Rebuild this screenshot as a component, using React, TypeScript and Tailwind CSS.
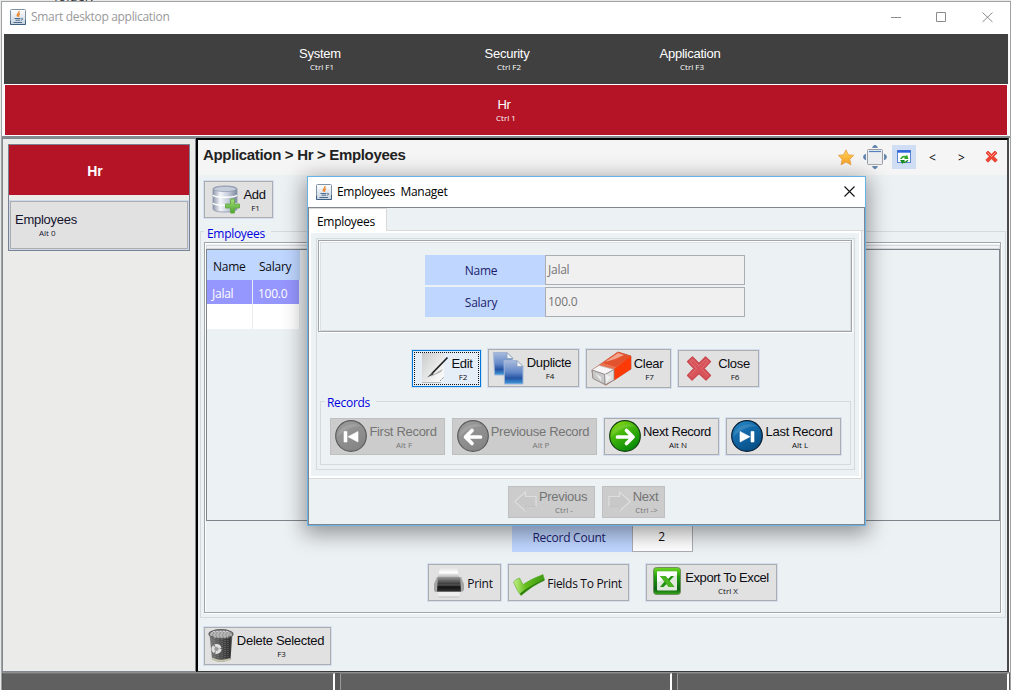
import type { ReactNode } from "react";

const UI = "font-['Open_Sans','Noto_Sans',sans-serif]";

function JavaIcon() {
  return (
    <svg width="16" height="16" viewBox="0 0 16 16" className="block shrink-0">
      <defs>
        <linearGradient id="jv" x1="0" y1="0" x2="0" y2="1">
          <stop offset="0" stopColor="#ffffff" />
          <stop offset="1" stopColor="#c6d2de" />
        </linearGradient>
      </defs>
      <rect x="0.5" y="0.5" width="15" height="15" rx="1" fill="url(#jv)" stroke="#7e92a6" />
      <path d="M0.5 15.5V12M0.5 15.5h15V11" stroke="#3f5f80" fill="none" />
      <path d="M9 2C10 4 6 4.500 7.500 7.500M10 4.500C8 5.500 8.500 6.500 8.800 7.800" stroke="#ec7d1a" strokeWidth="1.200" fill="none" />
      <path d="M4.500 9.500h6M5.500 11.200h4.500M3.500 13.500h8.500M11.300 9.300c2-.3 1.800 1.700-.5 1.900" stroke="#4a6c8f" strokeWidth="1" fill="none" />
    </svg>
  );
}

function AddIcon() {
  return (
    <svg width="28" height="29" viewBox="0 0 28 29" className="block">
      <defs>
        <linearGradient id="db" x1="0" x2="1">
          <stop offset="0" stopColor="#8f99ab" />
          <stop offset="0.3" stopColor="#f4f6fa" />
          <stop offset="0.65" stopColor="#c3cad8" />
          <stop offset="1" stopColor="#7e899f" />
        </linearGradient>
        <linearGradient id="pl" x1="0" x2="0" y1="0" y2="1">
          <stop offset="0" stopColor="#a7dc7c" />
          <stop offset="1" stopColor="#4ba52c" />
        </linearGradient>
      </defs>
      <path d="M1 4C1 0 25 0 25 4V24C25 28 1 28 1 24Z" fill="url(#db)" stroke="#8c95a9" strokeWidth="0.800" />
      <ellipse cx="13" cy="4" rx="11.500" ry="2.600" fill="#c5ccda" stroke="#8e98ac" strokeWidth="0.700" />
      <path d="M1 10C2 13 24 13 25 10M1 18C2 21 24 21 25 18" stroke="#fff" strokeWidth="1.400" fill="none" />
      <path d="M18.500 14h4v5H27.500v4h-5v5h-4v-5h-5v-4h5z" fill="url(#pl)" stroke="#62a948" strokeWidth="0.900" />
    </svg>
  );
}

function EditIcon() {
  return (
    <svg width="27" height="30" viewBox="0 0 27 30" className="block">
      <defs>
        <linearGradient id="pp" x1="0" x2="1" y1="0" y2="1">
          <stop offset="0" stopColor="#c9cacb" />
          <stop offset="0.8" stopColor="#f7f7f7" />
        </linearGradient>
      </defs>
      <path d="M0 0H22V26L18 29.500H0Z" fill="url(#pp)" />
      <path d="M0 29.500h19" stroke="#bbb" />
      <path d="M8 24Q18 17 21 16L19 19Z" fill="#9a9a9a" opacity="0.700" />
      <path d="M25.500 4.500L10 20.500" stroke="#1d1d1d" strokeWidth="1.700" />
      <path d="M11 18.800L5 24.500L11.500 21.500Z" fill="#444" />
      <path d="M18 28l4-4" stroke="#888" strokeDasharray="2 1" />
    </svg>
  );
}

function CopyIcon() {
  return (
    <svg width="31" height="33" viewBox="0 0 31 33" className="block">
      <defs>
        <linearGradient id="cp" x1="0" x2="0" y1="0" y2="1">
          <stop offset="0" stopColor="#a9bbdc" />
          <stop offset="0.5" stopColor="#6488c8" />
          <stop offset="0.75" stopColor="#2554a4" />
          <stop offset="1" stopColor="#3f9cdc" />
        </linearGradient>
      </defs>
      <path d="M0.500 0.500H14L19.500 6V23H1.500Z" fill="url(#cp)" stroke="#a3b6d8" />
      <path d="M14 0.500V6.500H20Z" fill="#edf2f8" stroke="#8a98b0" strokeWidth="0.700" />
      <path d="M11 8.500H24L30 14.500V32H11.500Z" fill="url(#cp)" stroke="#a3b6d8" />
      <path d="M24 8.500V14.500H30Z" fill="#edf2f8" stroke="#8a98b0" strokeWidth="0.700" />
    </svg>
  );
}

function EraserIcon() {
  return (
    <svg width="41" height="35" viewBox="0 0 41 35" className="block">
      <path d="M1 19L27 1L40 5V18L15 34L2 27Z" fill="#e63611" stroke="#a3553f" strokeWidth="0.700" />
      <path d="M1 19L27 1L40 5L23 18.500Z" fill="#e8714f" />
      <path d="M12 12L27 1L40 5L25 16Z" fill="#e2522c" />
      <path d="M14 11L27 2L33 4Q24 9 14 11Z" fill="#f3a48d" />
      <path d="M40 5L23 18.500V29.500L40 18Z" fill="#fb3a08" />
      <path d="M1 19L8 14.500L23 18.500L14 23.500Z" fill="#f6f6f6" stroke="#bbb" strokeWidth="0.600" />
      <path d="M1 19L14 23.500V33.500L2 27.500Z" fill="#c8c8c8" stroke="#888" strokeWidth="0.800" />
      <path d="M14 23.500L23 18.500V29L14 34Z" fill="#dedede" stroke="#888" strokeWidth="0.800" />
      <path d="M14 23L20 26L15 32ZM4 22L10 26V30Z" fill="#f4f4f4" opacity="0.800" />
    </svg>
  );
}

function CloseIcon() {
  return (
    <svg width="26" height="25" viewBox="0 0 26 25" className="block">
      <path d="M6.500 1L13 7.500L19.500 1L24.500 5.500L18 12.500L24.500 19.500L20 24L13 17.500L6 24L1.500 19.500L8 12.500L1.500 5.500Z" fill="#d8545a" stroke="#c9474d" strokeWidth="1.200" strokeLinejoin="round" />
      <path d="M4 5.500L6.500 3.500L13 10L19.500 3.500L22 5.500L15.500 12.500L22 19.500M4 19.500L10.500 12.500L4 5.500" fill="none" stroke="#e0777b" strokeWidth="0.800" />
    </svg>
  );
}

type CircleKind = "first" | "prev" | "next" | "last";
const circleFill = { first: "#929292", prev: "#929292", next: "#47b80c", last: "#136aaa" };
const circleTop = { first: "#9c9c9c", prev: "#9c9c9c", next: "#9ce410", last: "#2a91ce" };
const circleLow = { first: "#858585", prev: "#858585", next: "#078b08", last: "#075087" };
const circleEdge = { first: "#5c5c5c", prev: "#5c5c5c", next: "#133f12", last: "#071c33" };

function CircleIcon({ kind }: { kind: CircleKind }) {
  return (
    <svg width="32" height="32" viewBox="0 0 32 32" className="block">
      <defs>
        <linearGradient id={"ci" + kind} x1="0" x2="0.6" y1="0" y2="1">
          <stop offset="0" stopColor={circleTop[kind]} />
          <stop offset="0.45" stopColor={circleFill[kind]} />
          <stop offset="1" stopColor={circleLow[kind]} />
        </linearGradient>
      </defs>
      <circle cx="16" cy="16" r="15.300" fill={"url(#ci" + kind + ")"} stroke={circleEdge[kind]} strokeWidth="1.200" />
      <path d="M2 17C5 5 17 2 26 6C20 6 9 9 2 17Z" fill="#fff" opacity="0.120" />
      {kind === "first" && <path d="M9 11.500h3v10.500H9zM23 11.500v10.500L13 16.700z" fill="#fff" stroke="#fff" strokeWidth="0.600" strokeLinejoin="round" />}
      {kind === "last" && <path d="M20 11.500h3v10.500h-3zM9 11.500v10.500L19 16.700z" fill="#fff" stroke="#fff" strokeWidth="0.600" strokeLinejoin="round" />}
      {kind === "prev" && <path d="M23.500 17H10M15 10.500L8.500 17L15 23.500" stroke="#fff" strokeWidth="3.700" strokeLinecap="round" strokeLinejoin="round" fill="none" />}
      {kind === "next" && <path d="M8.500 17H23M17.500 10.500L24 17L17.500 23.500" stroke="#fff" strokeWidth="3.700" strokeLinecap="round" strokeLinejoin="round" fill="none" />}
    </svg>
  );
}

function GhostArrow({ right = false }: { right?: boolean }) {
  return (
    <svg width="23" height="21" viewBox="0 0 23 21" className={right ? "block -scale-x-100" : "block"}>
      <path d="M0.800 10.500L11.500 1V5.500H22V15.500H11.500V20Z" fill="#c8c8c8" stroke="#dedede" strokeWidth="1.200" />
      <path d="M11.500 20V15.500H22" stroke="#b8b8b8" strokeWidth="0.700" fill="none" />
    </svg>
  );
}

function PrintIcon() {
  return (
    <svg width="30" height="30" viewBox="0 0 30 30" className="block">
      <defs>
        <linearGradient id="pr" x1="0" x2="0" y1="0" y2="1">
          <stop offset="0" stopColor="#9a9a9a" />
          <stop offset="0.4" stopColor="#4a4a4a" />
          <stop offset="0.7" stopColor="#151515" />
          <stop offset="1" stopColor="#333" />
        </linearGradient>
        <linearGradient id="ps" x1="0" x2="0" y1="0" y2="1">
          <stop offset="0" stopColor="#e3e3e3" />
          <stop offset="0.5" stopColor="#ffffff" />
          <stop offset="1" stopColor="#b9b9b9" />
        </linearGradient>
      </defs>
      <path d="M6 0H23L25 9H4Z" fill="url(#ps)" />
      <path d="M3 9H27L30 16V22Q29 24 26 24H3Q0 24 0 22V16Z" fill="#a4a4a4" />
      <path d="M4 9H26L27 23.500H3Z" fill="url(#pr)" />
      <path d="M3 17H27" stroke="#777" strokeWidth="0.700" />
      <path d="M4.500 24H25.500V29.500H4.500Z" fill="#eeeeee" />
      <path d="M4.500 29H25.500" stroke="#bbb" />
    </svg>
  );
}

function CheckIcon() {
  return (
    <svg width="32" height="22" viewBox="0 0 32 22" className="block">
      <defs>
        <linearGradient id="ck" x1="0" x2="1" y1="0" y2="0">
          <stop offset="0" stopColor="#c6f28a" />
          <stop offset="0.4" stopColor="#63bd1b" />
          <stop offset="1" stopColor="#3f9a14" />
        </linearGradient>
      </defs>
      <path d="M0.500 8Q3 5 6.500 4L10 10.500Q18 5 30 0.500L31.500 6Q20 11 8 21.500Q4 17 0.500 8Z" fill="url(#ck)" stroke="#5aa830" strokeWidth="0.600" />
      <path d="M7 19.500Q16 12 31 5.500L31.500 6.500Q20 11 8 21.500Z" fill="#2c7d0c" />
    </svg>
  );
}

function ExcelIcon() {
  return (
    <svg width="28" height="28" viewBox="0 0 28 28" className="block">
      <defs>
        <linearGradient id="xl" x1="0" x2="0" y1="0" y2="1">
          <stop offset="0" stopColor="#70d824" />
          <stop offset="0.35" stopColor="#219a0f" />
          <stop offset="0.8" stopColor="#0b6610" />
          <stop offset="1" stopColor="#38a81a" />
        </linearGradient>
      </defs>
      <rect x="0.500" y="0.500" width="27" height="27" rx="3" fill="url(#xl)" stroke="#6e8f60" />
      <rect x="4" y="4.500" width="20" height="19" rx="1" fill="#dfe8db" />
      <path d="M4 15L24 8V4.500H4Z" fill="#fff" />
      <path d="M7 9H12.500L15 12L18 9H21L16.500 14L21.500 20H15.800L13.500 17L10.500 20H7L11.500 14.500Z" fill="#23900f" />
      <path d="M7 9H12.500L21.500 20H15.800Z" fill="#4ab521" />
    </svg>
  );
}

function TrashIcon() {
  return (
    <svg width="26" height="34" viewBox="0 0 26 34" className="block">
      <defs>
        <linearGradient id="tr" x1="0" x2="1">
          <stop offset="0" stopColor="#7d7d7d" />
          <stop offset="0.5" stopColor="#4f4f4f" />
          <stop offset="0.9" stopColor="#303030" />
          <stop offset="1" stopColor="#777" />
        </linearGradient>
      </defs>
      <path d="M1.500 5L4 30Q12 35 22.500 30.500L24.500 5Z" fill="url(#tr)" />
      <path d="M4 29.500Q12 34 22.500 30" stroke="#c3c2ad" strokeWidth="2.200" fill="none" />
      <path d="M14 10V30M17 9V30M20 9V29M6 9L7 29M10 10V30" stroke="#929292" strokeWidth="0.600" strokeDasharray="1 1" />
      <ellipse cx="13" cy="5" rx="12" ry="4.300" fill="#999" stroke="#606060" strokeWidth="1.200" />
      <path d="M3 4H23M2 6H24M5 2.500H21M6 8H20" stroke="#ddd" strokeWidth="0.900" strokeDasharray="2 1.300" />
      <circle cx="8.500" cy="20" r="3.600" fill="#999" stroke="#dedede" strokeWidth="3" strokeDasharray="6.500 1" />
    </svg>
  );
}

function StarIcon() {
  return (
    <svg width="17" height="17" viewBox="0 0 17 17" className="block">
      <defs>
        <linearGradient id="st" x1="0" x2="0" y1="0" y2="1">
          <stop offset="0" stopColor="#ffd75a" />
          <stop offset="1" stopColor="#f9a024" />
        </linearGradient>
      </defs>
      <path d="M8 0.800L10.300 5.800L15.700 6.400L11.800 10.200L12.900 15.800L8 13L3.100 15.800L4.200 10.200L0.300 6.400L5.700 5.800Z" fill="url(#st)" stroke="#e79d42" strokeWidth="0.800" strokeLinejoin="round" />
    </svg>
  );
}

function ResizeIcon() {
  return (
    <svg width="24" height="26" viewBox="0 0 24 26" className="block">
      <rect x="4.500" y="5.500" width="15" height="15" rx="1" fill="#eceef0" stroke="#999ea6" />
      <path d="M6 7.500H18" stroke="#5681bd" strokeWidth="1.200" />
      <path d="M5 20.500H19" stroke="#aaa" />
      <path d="M9.500 3.500Q12 -1 14.500 3.500ZM9.500 22.500H14.500Q12 27 9.500 22.500ZM2.500 10V16Q-1.500 13 2.500 10ZM21.500 10Q25.500 13 21.500 16Z" fill="#5f86b4" stroke="#456d9b" strokeWidth="0.600" />
    </svg>
  );
}

function RefreshIcon() {
  return (
    <svg width="14" height="14" viewBox="0 0 14 14" className="block">
      <rect x="0.500" y="0.500" width="13" height="12" fill="#fff" stroke="#5c86d4" />
      <path d="M0.500 1.500H13.500" stroke="#2b66dc" strokeWidth="2.400" />
      <path d="M3 9Q5 4.500 9 6L10 4.500L11.500 9H7L8 7.800Q6 7 5 9Z" fill="#34a82c" />
      <path d="M11.500 10Q9.500 14 6.500 12.800L5.500 14L3 10H8L7 11.200Q9 12 10 10Z" fill="#158a20" />
    </svg>
  );
}

function RedXIcon() {
  return (
    <svg width="13" height="13" viewBox="0 0 13 13" className="block">
      <path d="M3 1L6.500 4.300L10 1L12 3L8.800 6.500L12.300 10L10.200 12.200L6.500 8.800L3 12.200L0.800 10L4.200 6.500L1 3Z" fill="#ef4432" stroke="#d73022" strokeWidth="0.700" />
      <path d="M2.500 2.500L6.500 6.500L10.500 2.500" stroke="#ff9985" fill="none" />
    </svg>
  );
}

type BtnProps = {
  box: string;
  label: string;
  sub?: string;
  labelBox: string;
  icon: ReactNode;
  iconBox: string;
  disabled?: boolean;
  focused?: boolean;
  plain?: boolean;
  labelTracking?: string;
};

function Btn({ box, label, sub, labelBox, icon, iconBox, disabled, focused, plain, labelTracking = "tracking-[-0.3px]" }: BtnProps) {
  const tone = disabled
    ? "border-[#bfbfbf] bg-[#cccccc] text-[#747474]"
    : focused
      ? "border-[#0078d7] bg-[#e5eef7] text-[#0c0c12] shadow-[0_0_0_1px_#cfe0f5]"
      : "border-[#adadad] bg-[#e1e1e1] text-[#0c0c12] shadow-[0_0_0_1px_#d3def2]";
  return (
    <button className={`flex shrink-0 items-start border text-left ${tone} ${box}`}>
      <span className={`shrink-0 ${iconBox}`}>{icon}</span>
      <span className={`flex shrink-0 flex-col items-center whitespace-nowrap ${labelBox}`}>
        <span className={`leading-4 ${labelTracking} ${plain ? `${UI} text-[12px]` : "text-[13px]"}`}>{label}</span>
        {sub && <span className={`${UI} pl-0.5 text-[8px] leading-[10px]`}>{sub}</span>}
      </span>
    </button>
  );
}

function Menu({ label, sub, box }: { label: string; sub: string; box: string }) {
  return (
    <div className={`flex shrink-0 flex-col items-center whitespace-nowrap text-white ${box}`}>
      <span className="text-[13px] leading-4 tracking-[-0.25px]">{label}</span>
      <span className={`${UI} pl-1 text-[8px] leading-[10px]`}>{sub}</span>
    </div>
  );
}

function Field({ label, value }: { label: string; value: string }) {
  return (
    <div className={`flex h-[30px] text-[12px] tracking-[-0.25px] ${UI}`}>
      <div className="w-[120px] bg-[#bfd6ff] pr-2 text-center leading-[32px] text-[#1c1c6c]">{label}</div>
      <div className="w-[200px] border border-[#abadb3] bg-[#f0f0f0] pl-0.5 leading-[27px] text-[#757575]">{value}</div>
    </div>
  );
}

function Dialog() {
  return (
    <div className="absolute left-[307px] top-[176px] flex h-[350px] w-[559px] flex-col border border-[#66b3e8] bg-[#ecf1f4] shadow-[0_5px_20px_3px_rgba(0,0,0,0.38)]">
      <div className="flex h-[30px] shrink-0 items-center bg-white pl-2">
        <JavaIcon />
        <span className={`ml-[5px] grow whitespace-pre text-[12px] tracking-[-0.3px] text-black ${UI}`}>Employees  Managet</span>
        <svg width="11" height="11" viewBox="0 0 11 11" className="mb-[2px] mr-[10px] block">
          <path d="M0.500 0.500L10.500 10.500M10.500 0.500L0.500 10.500" stroke="#111" strokeWidth="1.100" />
        </svg>
      </div>
      <div className="flex grow flex-col border border-[#82878f]">
        <div className="flex h-[23px] shrink-0 items-end pt-px">
          <div className={`h-[23px] w-[78px] border-r border-t border-[#d9d9d9] bg-white pl-2 text-[12px] leading-[26px] tracking-[-0.3px] text-black ${UI}`}>Employees</div>
          <div className="h-px grow border-b border-[#d9d9d9]" />
        </div>
        <div className="mr-0.5 flex h-[248px] shrink-0 flex-col border-b border-r border-[#d9d9d9]">
          <div className="flex h-[247px] flex-col border-2 border-white px-[5px] pt-[5px]">
            <div className="flex h-[232px] w-[539px] flex-col border border-[#d5dadd] px-px pt-px">
              <div className="h-[92px] w-[534px] shrink-0 border border-[#a0a5a8] shadow-[1px_1px_0_#fff,inset_1px_1px_0_#fff,inset_2px_2px_0_#dce0e2,inset_-1px_-1px_0_#d5d9db]">
                <div className="ml-[106px] mt-[14px] flex w-80 flex-col gap-0.5">
                  <Field label="Name" value="Jalal" />
                  <Field label="Salary" value="100.0" />
                </div>
              </div>
              <div className="ml-[94px] mt-[17px] flex h-[39px] shrink-0 items-start">
                <Btn box="mt-px mr-[7px] h-[37px] w-[69px] outline-1 -outline-offset-3 outline-dotted outline-[#111]" label="Edit" sub="F2" focused icon={<EditIcon />} iconBox="ml-[9px] mt-[2px] w-[29px]" labelBox="mt-[5px] w-[22px]" />
                <Btn box="mr-[7px] h-[38px] w-[91px]" label="Duplicte" sub="F4" icon={<CopyIcon />} iconBox="ml-1 mt-0.5 w-[33px]" labelBox="mt-[5px] w-[46px]" />
                <Btn box="mr-[7px] h-[39px] w-[85px]" label="Clear" sub="F7" icon={<EraserIcon />} iconBox="ml-1 mt-px w-[42px]" labelBox="mt-[6px] w-[31px]" />
                <Btn box="mt-px h-[37px] w-[81px]" label="Close" sub="F6" icon={<CloseIcon />} iconBox="ml-[7px] mt-[5px] w-[31px]" labelBox="mt-[5px] w-[34px]" />
              </div>
              <div className="ml-[2px] mt-[13px] h-16 w-[531px] shrink-0 border border-[#d5dadd]">
                <div className={`-mt-[7px] ml-1 w-[51px] bg-[#ecf1f4] pl-0.5 text-[12px] leading-4 tracking-[-0.3px] text-[#0000dd] ${UI}`}>Records</div>
                <div className="ml-[9px] mt-[7px] flex gap-[7px]">
                  <Btn disabled box="h-[37px] w-[115px]" label="First Record" sub="Alt F" icon={<CircleIcon kind="first" />} iconBox="ml-1 mt-px w-[34px]" labelBox="mt-[5px] w-[68px]" />
                  <Btn disabled box="h-[37px] w-[145px]" label="Previouse Record" sub="Alt P" icon={<CircleIcon kind="prev" />} iconBox="ml-1 mt-px w-[34px]" labelBox="mt-[5px] w-[98px]" />
                  <Btn box="h-[37px] w-[115px]" label="Next Record" sub="Alt N" icon={<CircleIcon kind="next" />} iconBox="ml-1 mt-px w-[34px]" labelBox="mt-[5px] w-[68px]" labelTracking="tracking-[-0.4px]" />
                  <Btn box="h-[37px] w-[115px]" label="Last Record" sub="Alt L" icon={<CircleIcon kind="last" />} iconBox="ml-1 mt-px w-[34px]" labelBox="mt-[5px] w-[68px]" />
                </div>
              </div>
            </div>
          </div>
        </div>
        <div className="ml-[199px] mt-[7px] flex gap-[7px]">
          <Btn disabled box="h-8 w-[87px]" label="Previous" sub="Ctrl -" icon={<GhostArrow />} iconBox="ml-[5px] mt-1 w-[25px]" labelBox="mt-[2px] w-[48px]" />
          <Btn disabled box="h-8 w-[63px]" label="Next" sub="Ctrl ->" icon={<GhostArrow right />} iconBox="ml-[5px] mt-1 w-[24px]" labelBox="mt-[2px] w-[27px]" />
        </div>
      </div>
    </div>
  );
}

function Sidebar() {
  return (
    <aside className="h-[534px] w-[194px] shrink-0 border border-[#82878f] bg-[#ebebe9] pl-[5px] pt-[5px]">
      <div className="h-[107px] w-[182px] border border-[#7a828f]">
        <div className="h-[50px] bg-[#b51426] pr-1.5 text-center text-[14px] font-bold leading-[52px] text-white">
          <span className="pr-0.5">Hr</span>
        </div>
        <button className="mt-[5px] block h-[50px] w-[180px] border border-[#ccd9ef] text-left">
          <span className="flex h-12 w-[178px] flex-col items-start border border-[#adadad] bg-[#e1e1e1] pl-1 pt-[10px] text-[#14142e]">
            <span className="text-[13px] leading-4 tracking-[-0.25px]">Employees</span>
            <span className={`pl-6 text-[8px] leading-[10px] ${UI}`}>Alt 0</span>
          </span>
        </button>
      </div>
    </aside>
  );
}

function EmployeeTable() {
  return (
    <div className={`w-[93px] text-[12px] tracking-[-0.25px] ${UI}`}>
      <div className="flex h-[30px] bg-[#bfd6ff] leading-[33px] text-[#0c0c12]">
        <div className="w-[46px] pl-1.5">Name</div>
        <div className="pl-[6px]">Salary</div>
      </div>
      <div className="flex h-6 gap-px bg-[#ececf6] pr-px leading-[27px] text-white">
        <div className="w-[45px] bg-[#9696ff] pl-[5px]">Jalal</div>
        <div className="w-[46px] bg-[#9696ff] pl-[5px]">100.0</div>
      </div>
      <div className="flex h-[25px] gap-px bg-[#ececec] pr-px">
        <div className="w-[45px] bg-white" />
        <div className="w-[46px] bg-white" />
      </div>
    </div>
  );
}

function Content() {
  return (
    <main className="h-[534px] w-[813px] shrink-0 border-b-[1px] border-l-2 border-r-[2px] border-t-2 border-b-[#3a3a3a] border-l-black border-r-[#4a4a4a] border-t-black bg-[#ecf1f4]">
      <div className="flex h-[35px] items-start bg-[#f5f5f5] pl-[5px]">
        <h1 className="w-[635px] whitespace-nowrap pt-[6px] text-[15px] font-bold leading-[18px] tracking-[-0.33px] text-[#222]">Application &gt; Hr &gt; Employees</h1>
        <div className="pt-[9px]"><StarIcon /></div>
        <div className="ml-[8px] pt-1"><ResizeIcon /></div>
        <div className="ml-[5px] mt-[5px] flex h-6 w-6 items-center justify-center bg-[#cfddf5]"><RefreshIcon /></div>
        <div className={`ml-[13px] mt-[10px] text-[12px] leading-4 text-black ${UI}`}>&lt;</div>
        <div className={`ml-[22px] mt-[10px] text-[12px] leading-4 text-black ${UI}`}>&gt;</div>
        <div className="ml-[20px] mt-[10px]"><RedXIcon /></div>
      </div>
      <div className="pl-1.5 pt-1.5">
        <Btn box="h-[37px] w-[69px]" label="Add" sub="F1" icon={<AddIcon />} iconBox="ml-[7px] mt-[3px] w-[31px]" labelBox="mt-[5px] w-[23px]" />
      </div>
      <section className="ml-0.5 mt-[13px] h-[387px] w-[806px] border border-[#d5dadd]">
        <div className={`-mt-[6px] ml-[3px] w-[67px] bg-[#ecf1f4] pl-[3px] text-[12px] leading-4 tracking-[-0.3px] text-[#0000dd] ${UI}`}>Employees</div>
        <div className="ml-[3px] h-[371px] w-[797px] border border-[#a0a5a5] shadow-[1px_1px_0_#fff,inset_1px_1px_0_#fff]">
          <div className="ml-px mt-[2px] h-1 w-[794px] border border-[#d5d9dc] bg-[#f1f3f4]" />
          <div className="ml-px h-[272px] w-[794px] border border-[#7f848c]">
            <EmployeeTable />
          </div>
          <div className={`ml-[307px] mt-px flex h-[30px] text-[12px] leading-[32px] tracking-[-0.25px] ${UI}`}>
            <div className="w-[120px] bg-[#bfd6ff] pr-1.5 text-center text-[#1c1c6c]">Record Count</div>
            <div className="w-[61px] border border-[#abadb3] bg-white pr-0.5 text-center leading-[27px] text-[#111]">2</div>
          </div>
          <div className="ml-[223px] mt-3 flex">
            <Btn plain box="mr-[7px] h-[37px] w-[73px]" label="Print" icon={<PrintIcon />} iconBox="ml-[5px] mt-[3px] w-[33px]" labelBox="mt-[11px] w-[26px]" />
            <Btn plain box="mr-[17px] h-[37px] w-[121px]" label="Fields To Print" icon={<CheckIcon />} iconBox="ml-1 mt-[9px] w-[34px]" labelBox="mt-[11px] w-[75px]" />
            <Btn box="h-[37px] w-[131px]" label="Export To Excel" sub="Ctrl X" icon={<ExcelIcon />} iconBox="ml-1.5 mt-[2px] w-[32px]" labelBox="mt-[5px] w-[84px]" labelTracking="tracking-[-0.45px]" />
          </div>
        </div>
      </section>
      <div className="pl-1.5 pt-[9px]">
        <Btn box="h-[38px] w-[127px]" label="Delete Selected" sub="F3" icon={<TrashIcon />} iconBox="ml-[3px] mt-px w-[28px]" labelBox="mt-[5px] w-[89px]" />
      </div>
    </main>
  );
}

export default function App() {
  return (
    <div className="relative h-[690px] w-[1011px] overflow-hidden bg-[#e9e9e9] font-['Liberation_Sans',Arial,sans-serif]">
      <div className={`ml-[54px] h-0.5 overflow-hidden text-[13px] text-[#333] ${UI}`}>
        <div className="-mt-[12px] leading-4">folder.</div>
      </div>
      <div className="-mt-px ml-px flex h-[689px] w-[1010px] flex-col border-l border-r border-[#a0a3a3] bg-[linear-gradient(#fafafa,#fafafa)] bg-bottom bg-no-repeat bg-[length:100%_688px]">
        <div className="ml-0 h-px shrink-0 bg-[#a0a3a3]" />
        <div className="flex h-8 shrink-0 items-center bg-white pb-[3px]">
          <div className="ml-2"><JavaIcon /></div>
          <span className={`ml-[5px] grow text-[12px] tracking-[-0.32px] text-[#999] ${UI}`}>Smart desktop application</span>
          <svg width="104" height="12" viewBox="0 0 104 12" className="mr-[16px] block">
            <path d="M1 6.500H11M46.500 1.500H55.500V10.500H46.500ZM92.500 1.500L102.500 11M102.500 1.500L92.500 11" stroke="#8c8c8c" fill="none" />
          </svg>
        </div>
        <nav className="ml-0.5 flex h-[50px] w-[1004px] shrink-0 bg-[#404040] pt-3">
          <Menu box="ml-[294px] w-[44px]" label="System" sub="Ctrl F1" />
          <Menu box="ml-[142px] w-[46px]" label="Security" sub="Ctrl F2" />
          <Menu box="ml-[129px] w-[62px]" label="Application" sub="Ctrl F3" />
        </nav>
        <nav className="ml-0.5 flex h-[52px] w-[1004px] shrink-0 border border-white bg-[#b51426] pt-3">
          <Menu box="ml-[490px] w-[18px]" label="Hr" sub="Ctrl 1" />
        </nav>
        <div className="h-[2px] shrink-0 bg-[#858a8e]" />
        <div className="flex h-[534px] shrink-0">
          <Sidebar />
          <Content />
        </div>
        <footer className="flex h-[18px] shrink-0 gap-[5px] border-t border-[#8b8f91] bg-[#575757] pl-px">
          <div className="w-[332px] border-r-2 border-t border-r-white border-t-[#737373] bg-[#606060]" />
          <div className="w-[332px] border-l border-r-2 border-t border-l-[#9a9a9a] border-r-white border-t-[#737373] bg-[#606060]" />
          <div className="w-[332px] border-l border-r-2 border-t border-l-[#9a9a9a] border-r-white border-t-[#737373] bg-[#606060]" />
        </footer>
      </div>
      <Dialog />
    </div>
  );
}
